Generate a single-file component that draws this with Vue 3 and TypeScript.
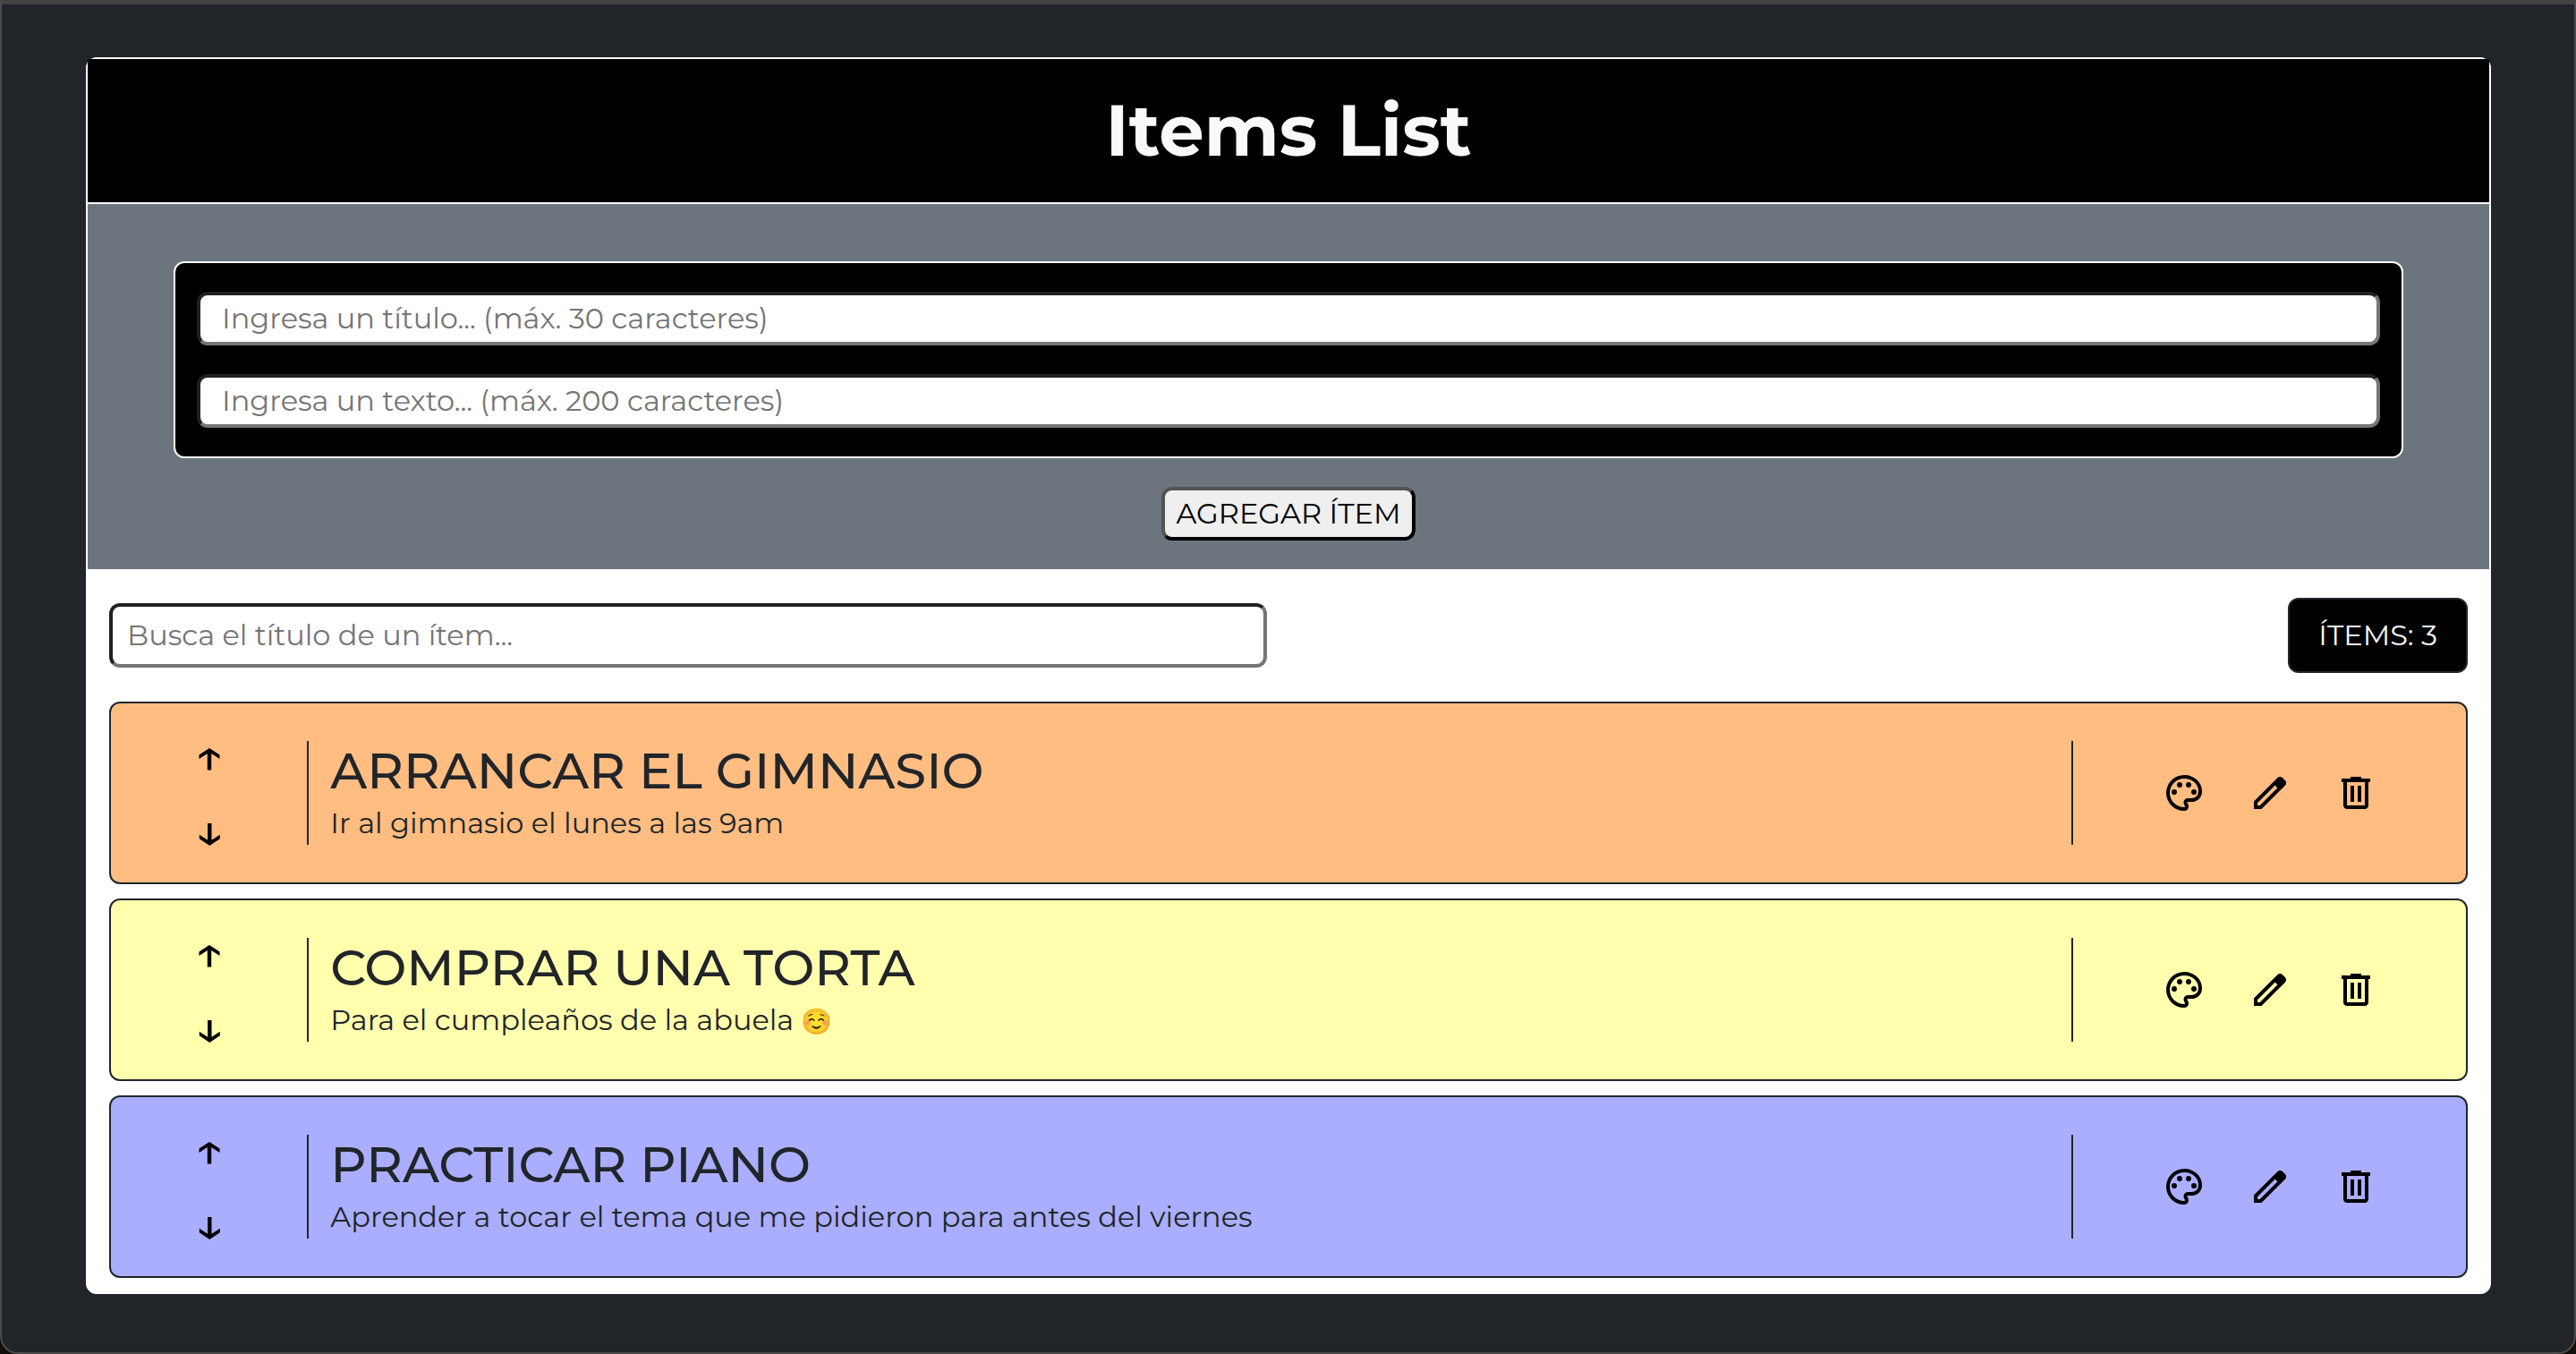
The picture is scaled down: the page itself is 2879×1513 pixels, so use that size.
<script setup lang="ts">
import { computed, ref } from 'vue'

interface Item {
  id: number
  title: string
  text: string
  emoji?: string
  color: string
}

const palette = ['#ffbd82', '#ffffad', '#abaeff']

const items = ref<Item[]>([
  { id: 1, title: 'ARRANCAR EL GIMNASIO', text: 'Ir al gimnasio el lunes a las 9am', color: palette[0] },
  { id: 2, title: 'COMPRAR UNA TORTA', text: 'Para el cumpleaños de la abuela', emoji: '☺️', color: palette[1] },
  { id: 3, title: 'PRACTICAR PIANO', text: 'Aprender a tocar el tema que me pidieron para antes del viernes', color: palette[2] },
])

const newTitle = ref('')
const newText = ref('')
const search = ref('')

const visibleItems = computed(() =>
  items.value.filter((item) => item.title.includes(search.value.toUpperCase())),
)

function addItem() {
  if (!newTitle.value.trim()) return
  items.value.push({
    id: Date.now(),
    title: newTitle.value.toUpperCase(),
    text: newText.value,
    color: palette[items.value.length % palette.length],
  })
  newTitle.value = ''
  newText.value = ''
}

function move(item: Item, step: number) {
  const from = items.value.indexOf(item)
  const to = from + step
  if (to < 0 || to >= items.value.length) return
  items.value.splice(from, 1)
  items.value.splice(to, 0, item)
}

function recolor(item: Item) {
  item.color = palette[(palette.indexOf(item.color) + 1) % palette.length]
}

function edit(item: Item) {
  newTitle.value = item.title
  newText.value = item.text
  remove(item)
}

function remove(item: Item) {
  items.value = items.value.filter((other) => other.id !== item.id)
}

const icons = {
  up: 'M24 16 35.5 23.6V28L26.2 22V40.4H21.8V22L12.5 28V23.6Z',
  down: 'M24.3 41 12.8 33.2V28.8L22.1 34.8V16H26.5V34.8L35.8 28.8V33.2Z',
  palette:
    'M480-80q-82 0-155-31.5t-127.5-86Q143-252 111.5-325T80-480q0-83 32.5-156t88-127Q256-817 330-848.5T488-880q80 0 151 27.5t124.5 76q53.5 48.5 85 115T880-518q0 115-70 176.5T640-280h-74q-9 0-12.5 5t-3.5 11q0 12 15 34.5t15 51.5q0 50-27.5 74T480-80ZM260-440q26 0 43-17t17-43q0-26-17-43t-43-17q-26 0-43 17t-17 43q0 26 17 43t43 17Zm120-160q26 0 43-17t17-43q0-26-17-43t-43-17q-26 0-43 17t-17 43q0 26 17 43t43 17Zm200 0q26 0 43-17t17-43q0-26-17-43t-43-17q-26 0-43 17t-17 43q0 26 17 43t43 17Zm120 160q26 0 43-17t17-43q0-26-17-43t-43-17q-26 0-43 17t-17 43q0 26 17 43t43 17ZM480-160q9 0 14.5-5t5.5-13q0-14-15-33t-15-57q0-42 29-67t71-25h70q66 0 113-38.5T800-518q0-121-92.5-201.5T488-800q-136 0-232 93t-96 227q0 133 93.5 226.5T480-160Z',
  edit: 'M200-200h57l391-391-57-57-391 391v57Zm-80 80v-170l528-527q12-11 26.5-17t30.5-6q16 0 31 6t26 18l55 56q12 11 17.5 26t5.5 30q0 16-5.5 30.5T817-647L290-120H120Z',
  trash:
    'M280-120q-33 0-56.5-23.5T200-200v-520h-40v-80h200v-40h240v40h200v80h-40v520q0 33-23.5 56.5T680-120H280Zm400-600H280v520h400v-520ZM360-280h80v-360h-80v360Zm160 0h80v-360h-80v360Z',
}
</script>

<template>
  <div class="page">
    <main class="board">
      <header class="banner">
        <h1>Items List</h1>
      </header>

      <form class="creator" @submit.prevent="addItem">
        <div class="fields">
          <input v-model="newTitle" type="text" maxlength="30" aria-label="Título" placeholder="Ingresa un título... (máx. 30 caracteres)" />
          <input v-model="newText" type="text" maxlength="200" aria-label="Texto" placeholder="Ingresa un texto... (máx. 200 caracteres)" />
        </div>
        <button class="add" type="submit">AGREGAR ÍTEM</button>
      </form>

      <section class="content">
        <div class="toolbar">
          <input v-model="search" class="search" type="text" aria-label="Buscar" placeholder="Busca el título de un ítem..." />
          <span class="count">ÍTEMS: {{ items.length }}</span>
        </div>

        <ul class="list">
          <li v-for="item in visibleItems" :key="item.id" class="item" :style="{ backgroundColor: item.color }">
            <div class="order">
              <button type="button" aria-label="Subir" @click="move(item, -1)">
                <svg viewBox="0 0 48 48"><path :d="icons.up" /></svg>
              </button>
              <button type="button" aria-label="Bajar" @click="move(item, 1)">
                <svg viewBox="0 0 48 48"><path :d="icons.down" /></svg>
              </button>
            </div>
            <div class="body">
              <h2>{{ item.title }}</h2>
              <p>{{ item.text }} <span v-if="item.emoji" class="emoji">{{ item.emoji }}</span></p>
            </div>
            <div class="actions">
              <button type="button" aria-label="Cambiar color" @click="recolor(item)">
                <svg viewBox="0 -960 960 960"><path :d="icons.palette" /></svg>
              </button>
              <button type="button" aria-label="Editar" @click="edit(item)">
                <svg viewBox="0 -960 960 960"><path :d="icons.edit" /></svg>
              </button>
              <button type="button" aria-label="Eliminar" @click="remove(item)">
                <svg viewBox="0 -960 960 960"><path :d="icons.trash" /></svg>
              </button>
            </div>
          </li>
        </ul>
      </section>
    </main>
  </div>
</template>

<style>
body {
  background: #140e0b;
}
</style>

<style scoped>
* {
  box-sizing: border-box;
  margin: 0;
}

.page {
  min-height: 100vh;
  padding: 59px 93px 64px 94px;
  border: 2px solid #4b4c4d;
  border-top: 5px solid #434343;
  border-radius: 0 0 20px 20px;
  background: #212529;
  color: #212529;
  font-family: Montserrat, Inter, 'Noto Color Emoji', sans-serif;
  font-size: 32px;
  line-height: 48px;
}

input,
button {
  font: inherit;
}

.board {
  border: 2px solid #fff;
  border-radius: 12px;
  background: #fff;
}

.banner {
  padding: 32px 0;
  border-bottom: 2px solid #fff;
  background: #000;
  color: #f8f9fa;
  text-align: center;
}

.banner h1 {
  font-size: 80px;
  line-height: 96px;
  font-weight: 700;
}

.creator {
  display: flex;
  flex-direction: column;
  align-items: center;
  gap: 32px;
  padding: 64px 96px 32px;
  background: #6c757d;
}

.fields {
  display: flex;
  flex-direction: column;
  gap: 32px;
  width: 100%;
  padding: 32px 24px;
  border: 2px solid #fff;
  border-radius: 12px;
  background: #000;
}

.fields input,
.search {
  height: 60px;
  padding: 0 24px 2px;
  border: 4px inset #767676;
  border-radius: 12px;
  background: #fff;
  color: #000;
}

input::placeholder {
  color: #757575;
  opacity: 1;
}

.add {
  height: 60px;
  padding: 0 12px;
  border: 4px outset #000;
  border-radius: 12px;
  background: #efefef;
  color: #000;
}

.content {
  padding: 32px 24px 16px;
}

.toolbar {
  display: flex;
  align-items: center;
  justify-content: space-between;
  margin-bottom: 32px;
}

.toolbar .search {
  width: calc(50% - 24px);
  height: 72px;
  padding: 0 16px 2px;
}

.count {
  padding: 16px 32px;
  border: 2px solid #212529;
  border-radius: 12px;
  background: #000;
  color: #f8f9fa;
}

.list {
  display: flex;
  flex-direction: column;
  gap: 16px;
  padding: 0;
  list-style: none;
}

.item {
  display: grid;
  grid-template-columns: 1fr 9fr 2fr;
  align-items: center;
  padding: 16px 0;
  border: 2px solid #212529;
  border-radius: 12px;
}

.order {
  display: flex;
  flex-direction: column;
  align-items: center;
}

.body {
  min-width: 0;
  padding: 0 24px;
  border: solid #212529;
  border-width: 0 2px;
}

.body h2 {
  padding-bottom: 2px;
  font-size: 56px;
  line-height: 66px;
  font-weight: 500;
}

.emoji {
  font-size: 28px;
  line-height: 1;
}

.actions {
  display: flex;
  justify-content: center;
  gap: 48px;
}

.order button,
.actions button {
  display: flex;
  padding: 0;
  border: 0;
  background: none;
  color: #000;
}

.order button {
  padding: 18px 0;
}

.item svg {
  width: 48px;
  height: 48px;
  fill: currentColor;
}
</style>
